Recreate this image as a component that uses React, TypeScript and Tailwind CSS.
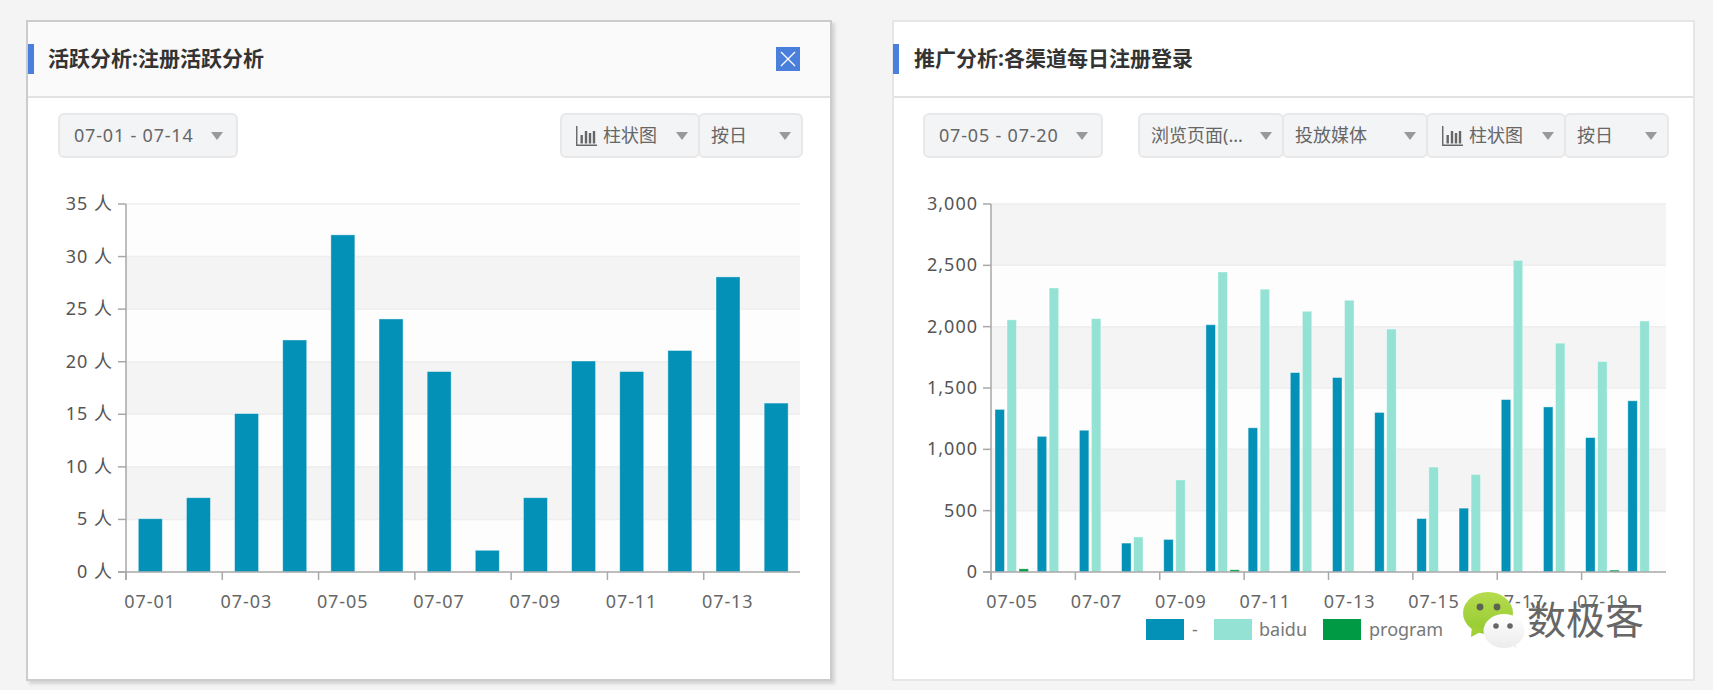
const fontStack = "font-['Noto_Sans','Noto_Sans_CJK_SC',sans-serif]";

function pad(day: number) {
  return `07-${String(day).padStart(2, "0")}`;
}

function BarIcon() {
  return (
    <svg width="21" height="20" viewBox="0 0 21 20" className="shrink-0 text-[#666]">
      <path d="M0.75 0V19.25H21" fill="none" stroke="currentColor" strokeWidth="1.4" />
      <rect x="4.5" y="9" width="2.4" height="8.5" fill="currentColor" />
      <rect x="8.8" y="5" width="2.4" height="12.5" fill="currentColor" />
      <rect x="12.8" y="7" width="2.4" height="10.5" fill="currentColor" />
      <rect x="16.8" y="5" width="2.4" height="12.5" fill="currentColor" />
    </svg>
  );
}

function Select({ label, width, icon, first, date }: { label: string; width: string; icon?: boolean; first?: boolean; date?: boolean }) {
  return (
    <div
      className={`flex h-[45px] shrink-0 items-center justify-between rounded-[6px] border-2 border-[#e8e8e8] bg-[#f3f4f6] text-[18px] text-[#666] ${width} ${first ? "" : "-ml-[2px]"} ${date ? "pl-[14px] pr-[13px] tracking-[0.8px]" : icon ? "pl-[14px] pr-[10px]" : "pl-[11px] pr-[10px]"}`}
    >
      <span className="flex items-center gap-[6px] whitespace-nowrap">
        {icon ? <BarIcon /> : null}
        {label}
      </span>
      <span className="h-0 w-0 border-x-[6px] border-t-[8px] border-x-transparent border-t-[#999]" />
    </div>
  );
}

type Series = { color: string; values: number[] };

function Chart({
  plotLeft,
  plotRight,
  max,
  step,
  labels,
  series,
  barOffset,
  barWidth,
  barStep,
  unit,
  legend,
}: {
  plotLeft: number;
  plotRight: number;
  max: number;
  step: number;
  labels: string[];
  series: Series[];
  barOffset: number;
  barWidth: number;
  barStep: number;
  unit?: string;
  legend?: boolean;
}) {
  const top = 25;
  const bottom = 393;
  const band = (plotRight - plotLeft) / labels.length;
  const y = (v: number) => bottom - (v / max) * (bottom - top);
  const ticks: number[] = [];
  for (let v = 0; v <= max; v += step) ticks.push(v);
  const label = (v: number) => v.toLocaleString("en-US") + (unit ? ` ${unit}` : "");

  return (
    <svg width="100%" height="500" className={`mt-[21px] block ${fontStack}`}>
      {ticks.slice(0, -1).map((v, i) => (
        <rect
          key={v}
          x={plotLeft}
          y={y(v + step)}
          width={plotRight - plotLeft}
          height={y(v) - y(v + step)}
          fill={(ticks.length - 2 - i) % 2 === (unit ? 0 : 1) ? "#fdfdfd" : "#f4f4f4"}
        />
      ))}
      {ticks.slice(1).map((v) => (
        <line key={v} x1={plotLeft} x2={plotRight} y1={y(v)} y2={y(v)} stroke="#eeeeee" strokeWidth="1.5" />
      ))}
      {labels.map((_, g) =>
        series.map((s, k) =>
          s.values[g] > 0 ? (
            <rect
              key={`${g}-${k}`}
              x={plotLeft + g * band + barOffset + k * barStep}
              y={y(s.values[g]) - 0.7}
              width={barWidth}
              height={bottom - y(s.values[g]) + 0.7}
              fill={s.color}
              stroke="#ffffff"
              strokeOpacity="0.5"
              strokeWidth="0.8"
            />
          ) : null,
        ),
      )}
      <path d={`M${plotLeft} ${top}V${bottom + 8}M${plotLeft - 8} ${bottom}H${plotRight}`} fill="none" stroke="#a8a8a8" strokeWidth="1.5" />
      {ticks.map((v) => (
        <g key={v}>
          <line x1={plotLeft - 8} x2={plotLeft} y1={y(v)} y2={y(v)} stroke="#a8a8a8" strokeWidth="1.5" />
          <text x={plotLeft - 13} y={y(v) + 6} textAnchor="end" fontSize="18" letterSpacing="1" fill="#555555">
            {label(v)}
          </text>
        </g>
      ))}
      {labels.map((text, i) =>
        i % 2 === 0 ? (
          <g key={text}>
            <line x1={plotLeft + i * band} x2={plotLeft + i * band} y1={bottom} y2={bottom + 8} stroke="#a8a8a8" strokeWidth="1.5" />
            <text x={plotLeft + (i + 0.5) * band} y={bottom + 36} textAnchor="middle" fontSize="18" letterSpacing="0.9" fill="#666666">
              {text}
            </text>
          </g>
        ) : null,
      )}
      {legend ? (
        <g fontSize="18" fill="#777777">
          <rect x="252" y="440" width="38" height="21" fill="#0391b8" />
          <text x="298" y="457">-</text>
          <rect x="320" y="440" width="38" height="21" fill="#93e2d3" />
          <text x="365" y="457">baidu</text>
          <rect x="429" y="440" width="38" height="21" fill="#009a44" />
          <text x="475" y="457">program</text>
        </g>
      ) : null}
    </svg>
  );
}

function WeChatLogo() {
  return (
    <svg width="62" height="58" viewBox="0 0 62 58" className="shrink-0">
      <defs>
        <linearGradient id="wechatGreen" x1="0" y1="0" x2="0" y2="1">
          <stop offset="0" stopColor="#b6dc4e" />
          <stop offset="1" stopColor="#93ca2f" />
        </linearGradient>
        <linearGradient id="wechatWhite" x1="0" y1="0" x2="0" y2="1">
          <stop offset="0" stopColor="#ffffff" />
          <stop offset="1" stopColor="#ececec" />
        </linearGradient>
      </defs>
      <ellipse cx="25" cy="21" rx="25" ry="21" fill="url(#wechatGreen)" />
      <path d="M9 33L8 45L21 38Z" fill="#9fd035" />
      <ellipse cx="41" cy="39" rx="20.5" ry="17" fill="url(#wechatWhite)" />
      <path d="M47 50L53 57L53 47Z" fill="#f0f0f0" />
      <circle cx="17" cy="15" r="3.4" fill="#5d6350" />
      <circle cx="34" cy="15" r="3.4" fill="#5d6350" />
      <circle cx="33" cy="34" r="2.8" fill="#666666" />
      <circle cx="47" cy="34" r="2.8" fill="#666666" />
    </svg>
  );
}

export default function App() {
  const leftLabels = Array.from({ length: 14 }, (_, i) => pad(i + 1));
  const rightLabels = Array.from({ length: 16 }, (_, i) => pad(i + 5));

  return (
    <div className={`flex h-[690px] w-[1713px] items-start gap-[60px] overflow-hidden bg-[#f4f4f4] pl-[26px] pt-[20px] ${fontStack}`}>
      <section className="h-[661px] w-[806px] shrink-0 border-2 border-[#cccccc] bg-white shadow-[3px_3px_3px_#d4d4d4]">
        <header className="flex h-[76px] items-center border-b-2 border-[#e2e2e2] bg-[#fafafa] pr-[30px]">
          <span className="h-[30px] w-[6px] bg-[#4a7fdc]" />
          <h2 className="ml-[14px] flex-1 text-[21px] font-bold text-[#333]">活跃分析:注册活跃分析</h2>
          <button className="flex h-[24px] w-[24px] items-center justify-center bg-[#4a7fdc]">
            <svg width="16" height="16" viewBox="0 0 16 16">
              <path d="M1 1L15 15M15 1L1 15" stroke="#ffffff" strokeWidth="1.3" />
            </svg>
          </button>
        </header>
        <div className="flex items-start justify-between pl-[30px] pr-[27px] pt-[15px]">
          <Select label="07-01 - 07-14" width="w-[180px]" first date />
          <div className="flex">
            <Select label="柱状图" width="w-[140px]" icon first />
            <Select label="按日" width="w-[105px]" />
          </div>
        </div>
        <Chart
          plotLeft={98}
          plotRight={772}
          max={35}
          step={5}
          unit="人"
          labels={leftLabels}
          series={[{ color: "#0391b8", values: [5, 7, 15, 22, 32, 24, 19, 2, 7, 20, 19, 21, 28, 16] }]}
          barOffset={12.3}
          barWidth={24}
          barStep={0}
        />
      </section>

      <section className="relative h-[661px] w-[803px] shrink-0 border-2 border-[#e6e6e6] bg-white">
        <header className="flex h-[76px] items-center border-b-2 border-[#e2e2e2] pr-[30px]">
          <span className="-ml-[1px] h-[30px] w-[6px] bg-[#4a7fdc]" />
          <h2 className="ml-[15px] flex-1 text-[21px] font-bold text-[#333]">推广分析:各渠道每日注册登录</h2>
        </header>
        <div className="flex items-start justify-between pl-[29px] pr-[24px] pt-[15px]">
          <Select label="07-05 - 07-20" width="w-[180px]" first date />
          <div className="flex">
            <Select label="浏览页面(..." width="w-[146px]" first />
            <Select label="投放媒体" width="w-[146px]" />
            <Select label="柱状图" width="w-[140px]" icon />
            <Select label="按日" width="w-[105px]" />
          </div>
        </div>
        <Chart
          plotLeft={97}
          plotRight={772}
          max={3000}
          step={500}
          labels={rightLabels}
          series={[
            { color: "#0391b8", values: [1320, 1100, 1150, 230, 260, 2010, 1170, 1620, 1580, 1295, 430, 515, 1400, 1340, 1090, 1390] },
            { color: "#93e2d3", values: [2050, 2310, 2060, 280, 745, 2440, 2300, 2120, 2210, 1975, 850, 790, 2535, 1860, 1710, 2040] },
            { color: "#009a44", values: [20, 0, 0, 0, 0, 12, 0, 0, 0, 0, 0, 0, 0, 0, 10, 0] },
          ]}
          barOffset={4}
          barWidth={9.5}
          barStep={12}
          legend
        />
        <div className="absolute left-[569px] top-[570px] flex items-start gap-[2px]">
          <WeChatLogo />
          <span className="mt-[-2px] text-[39px] leading-[58px] text-[#666]">数极客</span>
        </div>
      </section>
    </div>
  );
}
